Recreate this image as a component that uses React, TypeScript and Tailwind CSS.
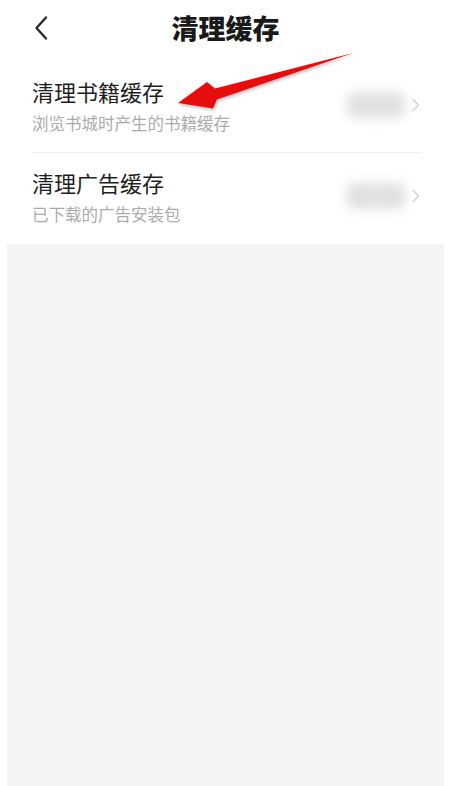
import React from "react";

function Chevron() {
  return (
    <svg width="10" height="14" viewBox="0 0 10 14" fill="none">
      <path d="M2 1.5 L7.5 7 L2 12.5" stroke="#d2d2d2" strokeWidth="1.4" strokeLinecap="round" strokeLinejoin="round" />
    </svg>
  );
}

function Row({ title, sub, cls }: { title: string; sub: string; cls: string }) {
  return (
    <div className={`flex items-center ${cls}`}>
      <div className="flex flex-col flex-1">
        <div className="text-[22px] leading-[30px] text-[#1e1e1e]">{title}</div>
        <div className="mt-[6px] text-[16.5px] leading-[22px] text-[#ababab]">{sub}</div>
      </div>
      <div className="flex items-center gap-[6px]">
        <div className="w-[58px] h-[26px] rounded-lg bg-[#e0e0e0] blur-[6px]" />
        <Chevron />
      </div>
    </div>
  );
}

export default function App() {
  return (
    <div
      className="w-[449px] h-[786px] bg-white flex flex-col overflow-hidden relative"
      style={{ fontFamily: '"Noto Sans CJK SC", "Noto Sans", sans-serif' }}
    >
      <div className="h-[56px] flex items-center relative shrink-0">
        <div className="pl-[33px]">
          <svg width="16" height="26" viewBox="0 0 16 26" fill="none">
            <path d="M13 2.5 L3.5 13 L13 23.5" stroke="#2a2a2a" strokeWidth="2.4" strokeLinecap="round" strokeLinejoin="round" />
          </svg>
        </div>
        <div className="absolute left-0 right-0 top-0 h-[56px] flex items-center justify-center pointer-events-none">
          <span className="text-[27px] font-black text-[#1a1a1a] pl-[2px]">清理缓存</span>
        </div>
      </div>
      <div className="pl-[32px] pr-[28px] shrink-0">
        <Row title="清理书籍缓存" sub="浏览书城时产生的书籍缓存" cls="pt-[20px] pb-[18px] border-b border-[#efefef]" />
        <Row title="清理广告缓存" sub="已下载的广告安装包" cls="pt-[14px] pb-[19px]" />
      </div>
      <div className="flex-1 ml-[7px] mr-[5px] bg-[#f4f4f4]" />
      <svg className="absolute left-0 top-0 pointer-events-none" width="449" height="786" viewBox="0 0 449 786">
        <defs>
          <filter id="sh" x="-10%" y="-30%" width="120%" height="160%">
            <feDropShadow dx="1" dy="2" stdDeviation="1.5" floodColor="#000" floodOpacity="0.25" />
          </filter>
        </defs>
        <polygon
          points="178,103 207,82 215,88.5 353,53 217,99.5 213,108.5"
          fill="#e8110f"
          filter="url(#sh)"
        />
      </svg>
    </div>
  );
}
